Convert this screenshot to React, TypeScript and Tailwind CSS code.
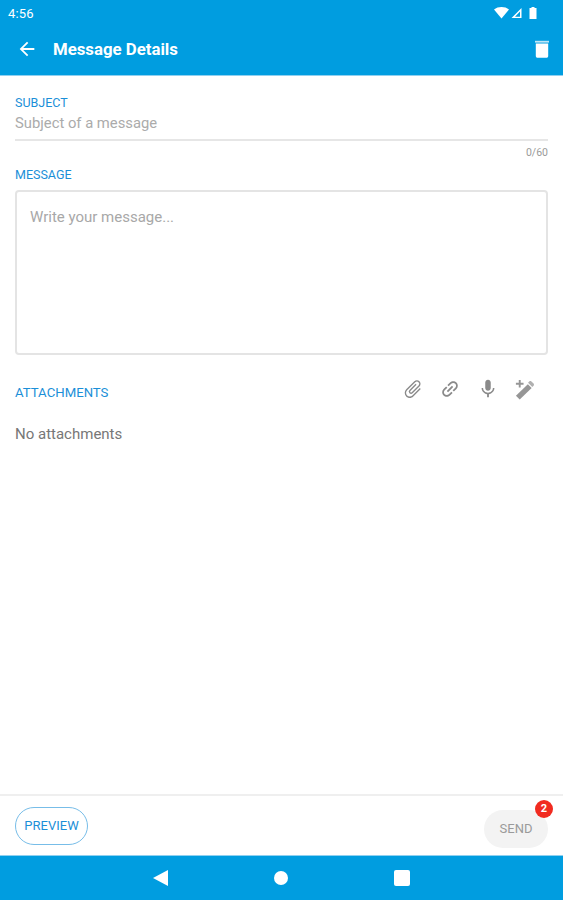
import { MdArrowBack, MdAttachFile, MdLink, MdMic } from 'react-icons/md';

const StatusBar = () => (
  <div className="h-[26px] flex items-center justify-between pl-2 pr-[26px] text-white">
    <span className="text-[13px] leading-none tracking-[0.2px]">4:56</span>
    <div className="flex items-center gap-[2px]">
      <svg width="15" height="12" viewBox="0 0 15 12"><path d="M0 2.5C4 -.8 11 -.8 15 2.5L7.5 11.5Z" fill="#fff" /></svg>
      <svg width="11" height="12" viewBox="0 0 11 12"><path d="M10.5 1V11H.5ZM9 4.5L4 9.8H9Z" fill="#fff" fillRule="evenodd" /></svg>
      <svg width="8" height="12" viewBox="0 0 8 12" className="ml-[5px]"><path d="M2.5 0H5.5V1H7.5V12H.5V1H2.5Z" fill="#fff" /></svg>
    </div>
  </div>
);

const TrashIcon = () => (
  <svg width="14" height="18" viewBox="0 0 14 18">
    <path d="M0 0.8H14V2.6H0Z" fill="#fff" opacity="0.75" />
    <path d="M.8 3.4H13.2V16C13.2 17 12.4 17.8 11.4 17.8H2.6C1.6 17.8 .8 17 .8 16Z" fill="#fff" />
  </svg>
);

const WandIcon = () => (
  <svg width="21" height="21" viewBox="0 0 22 22" fill="#969696">
    <path d="M14.5 5.5L18.5 9.5L6 21.5L2 17.5Z" />
    <path d="M16 2.5C16.7 1.9 17.6 1.9 18.3 2.5L20.5 4.7C21.1 5.4 21.1 6.3 20.5 7L19.2 8.3L14.7 3.8Z" opacity="0.75" />
    <path d="M5 1H7V4H10V6H7V9H5V6H2V4H5Z" />
  </svg>
);

export default function App() {
  return (
    <div className="w-[563px] h-[900px] flex flex-col bg-white font-['Roboto',sans-serif] overflow-hidden">
      <header className="h-[76px] shrink-0 bg-[#009de0] border-b border-[#8fd0f0]">
        <StatusBar />
        <div className="h-[46px] flex items-center justify-between pl-[16px] pr-[14px] text-white">
          <div className="flex items-center gap-[15px]">
            <MdArrowBack size={22} />
            <h1 className="text-[16.8px] font-bold leading-none">Message Details</h1>
          </div>
          <TrashIcon />
        </div>
      </header>

      <main className="flex-1 px-[15px] pt-[20px]">
        <div className="text-[12.5px] leading-[14px] text-[#1b8fd8]">SUBJECT</div>
        <div className="mt-[3px] h-[24px] text-[14.8px] leading-[20px] text-[#ababab]">Subject of a message</div>
        <div className="h-[2px] bg-[#e6e6e6] mt-[2px]" />
        <div className="mt-[6px] text-right text-[10.5px] leading-[12px] text-[#9a9a9a]">0/60</div>
        <div className="mt-[9px] text-[12.5px] leading-[14px] text-[#1b8fd8]">MESSAGE</div>
        <div className="mt-[8px] h-[165px] border-2 border-[#e4e4e4] rounded-[4px] pl-[13px] pt-[15px] text-[15px] leading-[20px] text-[#a8a8a8]">
          Write your message...
        </div>
        <div className="mt-[18px] flex items-center justify-between h-[32px] pr-[13px]">
          <span className="text-[13.2px] text-[#1b8fd8] mt-[7px]">ATTACHMENTS</span>
          <div className="flex items-center gap-[15.5px] text-[#8a8a8a]">
            <MdAttachFile size={22} className="rotate-45" />
            <MdLink size={22} className="-rotate-45" />
            <MdMic size={22} />
            <WandIcon />
          </div>
        </div>
        <p className="mt-[19px] text-[15px] leading-[20px] text-[#777777]">No attachments</p>
      </main>

      <footer className="h-[61px] shrink-0 border-t-2 border-[#efefef] flex items-center justify-between px-[15px]">
        <button className="w-[73px] h-[38px] border border-[#77bde8] rounded-full text-[13px] font-normal text-[#1b8fd8]">PREVIEW</button>
        <div className="relative mt-[6px]">
          <button className="w-[64px] h-[38px] bg-[#f3f3f3] rounded-full text-[13px] text-[#9a9a9a]">SEND</button>
          <span className="absolute -top-[10px] -right-[5px] w-[18px] h-[18px] rounded-full bg-[#f12b20] text-white text-[11px] font-bold leading-[18px] text-center">2</span>
        </div>
      </footer>

      <nav className="h-[45px] shrink-0 bg-[#009de0] border-t border-[#8fd0f0] flex items-center justify-center text-white">
        <div className="flex items-center gap-[106px] ml-[-1px]">
          <svg width="15" height="16" viewBox="0 0 15 16"><path d="M15 0V16L0 8Z" fill="#fff" /></svg>
          <div className="w-[14px] h-[14px] rounded-full bg-white" />
          <div className="w-[16px] h-[16px] rounded-[2px] bg-white" />
        </div>
      </nav>
    </div>
  );
}
